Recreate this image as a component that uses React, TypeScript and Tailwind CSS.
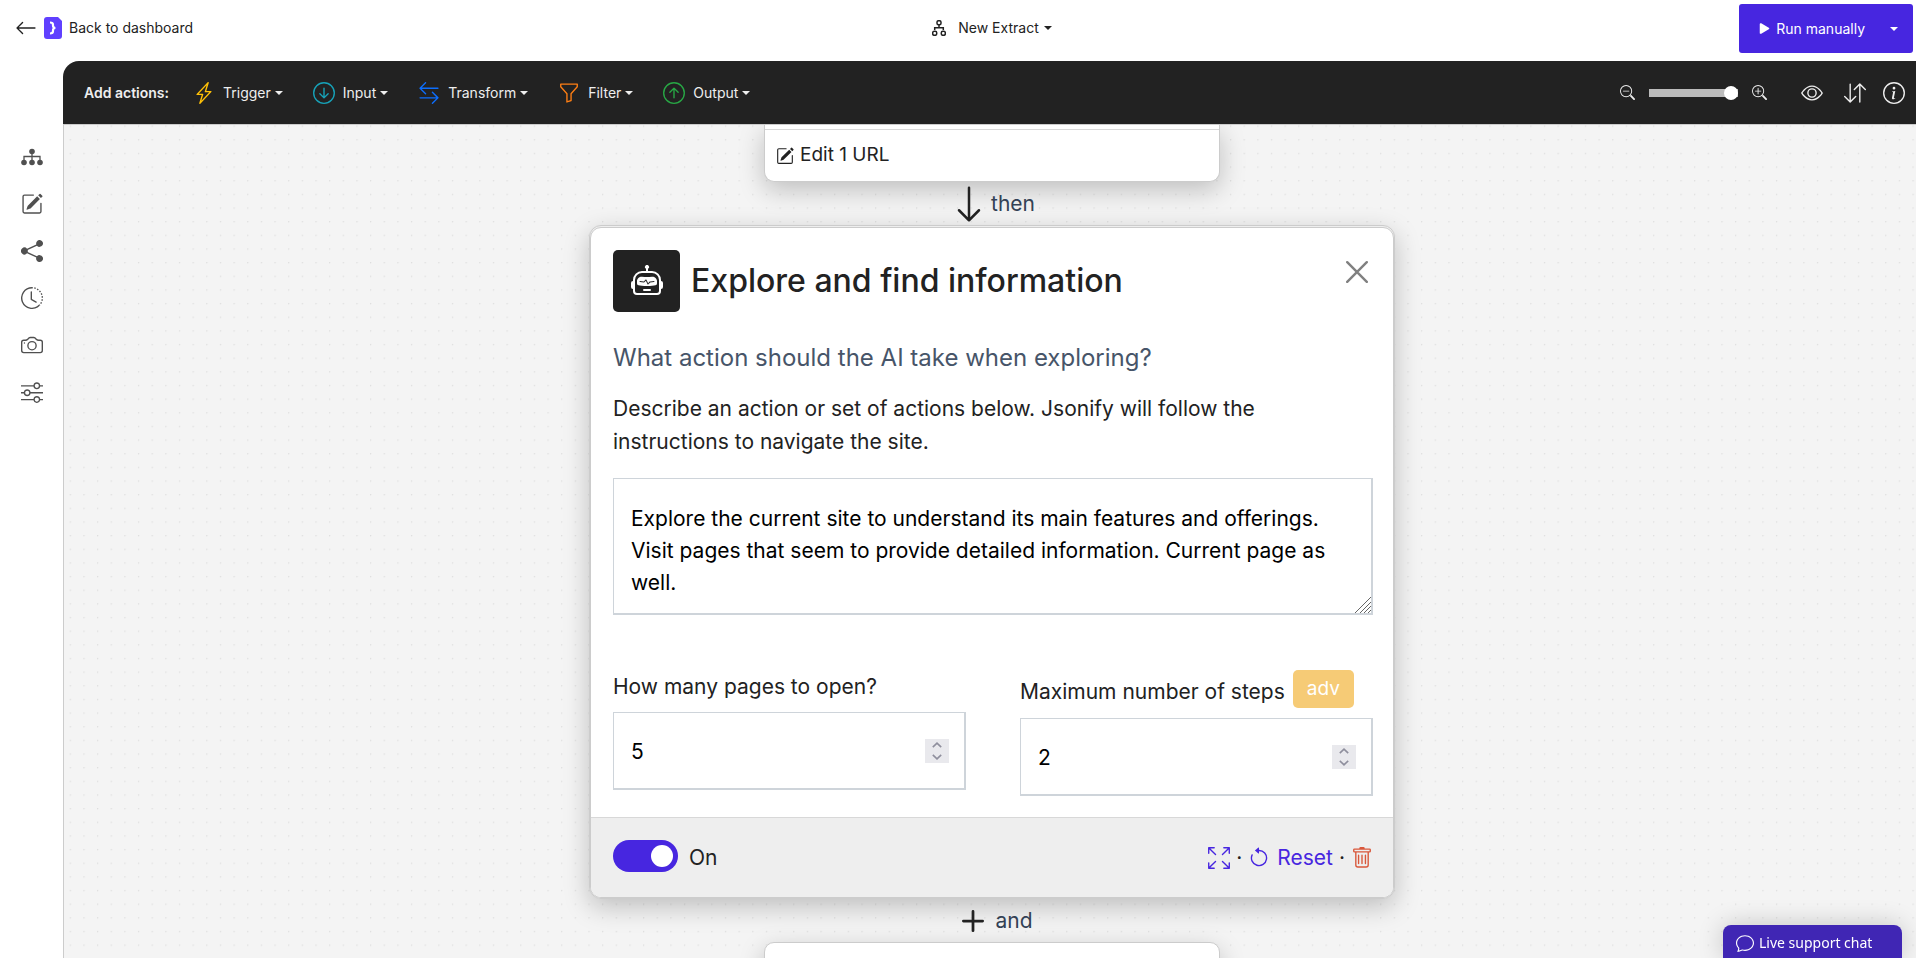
import React, { useState } from "react";
import {
  BsArrowCounterclockwise,
  BsArrowDown,
  BsArrowDownCircle,
  BsArrowDownUp,
  BsArrowLeft,
  BsArrowLeftRight,
  BsArrowUpCircle,
  BsArrowsFullscreen,
  BsCamera,
  BsChat,
  BsClockHistory,
  BsEye,
  BsFunnel,
  BsInfoCircle,
  BsLightningCharge,
  BsPencilSquare,
  BsPlayFill,
  BsPlus,
  BsRobot,
  BsShareFill,
  BsSliders,
  BsTrash,
  BsZoomIn,
  BsZoomOut,
} from "react-icons/bs";

const Caret = () => (
  <svg viewBox="0 0 8 4" className="h-1 w-2" fill="currentColor">
    <path d="M0 0h8L4 4z" />
  </svg>
);

const Logo = () => (
  <svg viewBox="0 0 18 22" className="h-[22px] w-[18px]">
    <path d="M3 0h11l4 4v15a3 3 0 0 1-3 3H3a3 3 0 0 1-3-3V3a3 3 0 0 1 3-3z" fill="#6040ff" />
    <path
      d="M6 5.500c2.200 0 3 .8 3 2.200v1.100c0 1.200.7 2 2.300 2.200-1.600.2-2.300 1-2.300 2.200v1.100c0 1.400-.8 2.200-3 2.200"
      fill="none"
      stroke="#fff"
      strokeWidth="2.200"
    />
  </svg>
);

const FlowIcon = () => (
  <svg viewBox="0 0 14 16" className="h-4 w-[14px]" fill="none" stroke="#222" strokeWidth="1.5">
    <rect x="5" y="0.700" width="4" height="4" rx="1.500" />
    <rect x="0.700" y="11.300" width="4" height="4" rx="1.500" />
    <rect x="9.300" y="11.300" width="4" height="4" rx="1.500" />
    <path d="M7 4.700v3M2.700 10V7.700h8.600V10" />
  </svg>
);

const SitemapIcon = () => (
  <svg viewBox="0 0 22 22" className="h-[22px] w-[22px]" fill="currentColor">
    <circle cx="11" cy="5.500" r="2.800" />
    <circle cx="3" cy="16.500" r="2.800" />
    <circle cx="11" cy="16.500" r="2.800" />
    <circle cx="19" cy="16.500" r="2.800" />
    <path d="M11 6v9M3 14v-3.500h16V14" fill="none" stroke="currentColor" strokeWidth="1.300" />
  </svg>
);

const actions = [
  { name: "Trigger", icon: <BsLightningCharge className="h-[22px] w-[22px] text-[#ffc107]" /> },
  { name: "Input", icon: <BsArrowDownCircle className="h-[22px] w-[22px] text-[#17a2b8]" /> },
  { name: "Transform", icon: <BsArrowLeftRight className="h-[22px] w-[22px] text-[#0d6efd]" /> },
  { name: "Filter", icon: <BsFunnel className="h-[22px] w-[22px] text-[#fd7e14]" /> },
  { name: "Output", icon: <BsArrowUpCircle className="h-[22px] w-[22px] text-[#28a745]" /> },
];

const sideLinks = [
  { name: "Workflow", icon: <SitemapIcon /> },
  { name: "Edit", icon: <BsPencilSquare className="h-[22px] w-[22px]" /> },
  { name: "Share", icon: <BsShareFill className="h-[22px] w-[22px]" /> },
  { name: "History", icon: <BsClockHistory className="h-[22px] w-[22px]" /> },
  { name: "Snapshots", icon: <BsCamera className="h-[22px] w-[22px]" /> },
  { name: "Settings", icon: <BsSliders className="h-[22px] w-[22px]" /> },
];

const Header = () => (
  <header className="flex h-[61px] items-start justify-between pl-[15px] pr-[3px] text-sm text-[#222]">
    <a href="#dashboard" className="flex flex-1 items-center pt-[17px]">
      <BsArrowLeft className="h-[22px] w-[22px]" />
      <span className="mx-[7px]">
        <Logo />
      </span>
      Back to dashboard
    </a>
    <button className="ml-14 flex items-center pt-[17px] leading-[22px]">
      <FlowIcon />
      <span className="ml-3 mr-[5px]">New Extract</span>
      <Caret />
    </button>
    <div className="flex flex-1 justify-end pt-1">
      <div className="flex h-[49px] rounded-[3px] bg-[#4726e0] text-white">
        <button className="flex items-center pl-4 pr-2.5">
          <BsPlayFill className="h-[19px] w-[19px]" />
          <span className="ml-0.5">Run manually</span>
        </button>
        <button aria-label="Run options" className="px-[15px]">
          <Caret />
        </button>
      </div>
    </div>
  </header>
);

const Toolbar = () => (
  <div className="flex h-[63px] shrink-0 items-center justify-between rounded-tl-2xl bg-[#222] pl-[21px] pr-[11px] text-sm text-[#eee]">
    <div className="flex items-center">
      <span className="mr-[9px] font-semibold">Add actions:</span>
      {actions.map((action) => (
        <button key={action.name} className="flex items-center px-[15px]">
          {action.icon}
          <span className="ml-2 mr-1">{action.name}</span>
          <Caret />
        </button>
      ))}
    </div>
    <div className="flex items-center">
      <button aria-label="Zoom out">
        <BsZoomOut className="h-[15px] w-[15px]" />
      </button>
      <input
        type="range"
        aria-label="Zoom"
        defaultValue={100}
        className="mx-[14px] h-2 w-[89px] appearance-none bg-[#bbb] [&::-webkit-slider-thumb]:h-[14px] [&::-webkit-slider-thumb]:w-[14px] [&::-webkit-slider-thumb]:appearance-none [&::-webkit-slider-thumb]:rounded-full [&::-webkit-slider-thumb]:bg-white"
      />
      <button aria-label="Zoom in">
        <BsZoomIn className="h-[15px] w-[15px]" />
      </button>
      <button aria-label="Preview" className="ml-[34px]">
        <BsEye className="h-[22px] w-[22px]" />
      </button>
      <button aria-label="Reorder" className="ml-[21px]">
        <BsArrowDownUp className="h-[22px] w-[22px]" />
      </button>
      <button aria-label="Info" className="ml-[17px]">
        <BsInfoCircle className="h-[22px] w-[22px]" />
      </button>
    </div>
  </div>
);

const NumberField = ({ id, value }: { id: string; value: number }) => {
  const [count, setCount] = useState(value);
  return (
    <div className="relative">
      <input
        id={id}
        type="number"
        value={count}
        onChange={(e) => setCount(Number(e.target.value))}
        className="h-[78px] w-full appearance-none border border-b-2 border-r-2 border-[#ced4da] bg-white px-[17px] pt-0.5 text-[21px] text-black [&::-webkit-inner-spin-button]:appearance-none"
      />
      <div className="absolute right-[17px] top-[27px] flex h-6 w-6 flex-col items-center bg-[#e9e9ed] text-[#8f8f9d]">
        <button aria-label="Increase" className="flex h-3 items-center" onClick={() => setCount(count + 1)}>
          <svg viewBox="0 0 10 6" className="h-1.5 w-2.5" fill="none" stroke="currentColor" strokeWidth="1.600">
            <path d="M.8 5.200 5 1.200l4.200 4" />
          </svg>
        </button>
        <button aria-label="Decrease" className="flex h-3 items-center" onClick={() => setCount(count - 1)}>
          <svg viewBox="0 0 10 6" className="h-1.5 w-2.5" fill="none" stroke="currentColor" strokeWidth="1.600">
            <path d="M.8.8 5 4.800l4.200-4" />
          </svg>
        </button>
      </div>
    </div>
  );
};

const ExploreCard = () => {
  const [on, setOn] = useState(true);
  return (
    <section className="w-full max-w-[806px] rounded-xl border border-[#ccc] bg-[#eee] pt-px shadow-[0_8px_26px_rgba(0,0,0,0.22)]">
      <div className="overflow-hidden rounded-[11px] border border-[#ccc] bg-white">
        <div className="pl-[22px] pr-5">
          <div className="flex items-start justify-between pt-[22px]">
            <div className="flex items-center">
              <div className="flex h-[62px] w-[67px] items-center justify-center rounded-[5px] bg-[#222]">
                <BsRobot className="h-8 w-8 text-white" />
              </div>
              <h2 className="ml-[11px] text-[32px] font-medium">Explore and find information</h2>
            </div>
            <button aria-label="Close" className="mr-[5px] mt-[11px]">
              <svg viewBox="0 0 22 22" className="h-[22px] w-[22px]" stroke="#808080" strokeWidth="2.400" strokeLinecap="round">
                <path d="M1.200 1.200l19.600 19.600M20.800 1.200L1.200 20.800" />
              </svg>
            </button>
          </div>
          <h3 className="mt-[30px] text-2xl text-[#475569]">What action should the AI take when exploring?</h3>
          <label htmlFor="prompt" className="mt-[18px] block text-[21px] leading-[33px]">
            Describe an action or set of actions below. Jsonify will follow the instructions to navigate the site.
          </label>
          <div className="relative mt-5">
            <textarea
              id="prompt"
              rows={3}
              className="block h-[137px] w-full resize-none overflow-hidden border border-b-2 border-r-2 border-[#ced4da] bg-white px-[17px] pt-6 text-[21px] leading-8 text-black"
              defaultValue="Explore the current site to understand its main features and offerings. Visit pages that seem to provide detailed information. Current page as well."
            />
            <svg viewBox="0 0 16 16" className="absolute bottom-0.5 right-0.5 h-4 w-4" stroke="#666">
              <path d="M0 16L16 0M5 16L16 5M9 16l7-7M13 16l3-3" />
            </svg>
          </div>
          <div className="grid grid-cols-2 gap-[54px] pb-[21px] pt-[55px] text-[21px] leading-[33px]">
            <div>
              <label htmlFor="pages" className="mb-[9px] block">
                How many pages to open?
              </label>
              <NumberField id="pages" value={5} />
            </div>
            <div>
              <label htmlFor="steps" className="mb-2.5 flex items-end whitespace-nowrap">
                <span>Maximum number of steps</span>
                <span className="ml-2 rounded-[5px] bg-[#f6cb76] px-3.5 text-[19px] leading-[38px] text-white">adv</span>
              </label>
              <NumberField id="steps" value={2} />
            </div>
          </div>
        </div>
        <div className="flex h-20 items-center justify-between border-t border-[#d8d8d8] bg-[#eee] pl-[22px] pr-5 text-[21px]">
          <div className="flex items-center">
            <input
              id="enabled"
              type="checkbox"
              role="switch"
              checked={on}
              onChange={() => setOn(!on)}
              className="relative mb-1 h-8 w-[65px] appearance-none rounded-full bg-gray-400 before:absolute before:left-[6px] before:top-[5px] before:h-[22px] before:w-[22px] before:rounded-full before:bg-white checked:bg-[#4726e0] checked:before:left-[38px]"
            />
            <label htmlFor="enabled" className="ml-[11px]">
              {on ? "On" : "Off"}
            </label>
          </div>
          <div className="flex items-center text-[#4726e0]">
            <button aria-label="Expand">
              <BsArrowsFullscreen className="h-[22px] w-[22px]" />
            </button>
            <span className="mx-1.5 text-[#222]">·</span>
            <button className="flex items-center">
              <BsArrowCounterclockwise className="mr-[7px] h-[22px] w-[22px]" />
              Reset
            </button>
            <span className="mx-1.5 text-[#222]">·</span>
            <button aria-label="Delete" className="text-[#d9573a]">
              <BsTrash className="h-[22px] w-[22px]" />
            </button>
          </div>
        </div>
      </div>
    </section>
  );
};

const Canvas = () => (
  <main className="relative flex flex-1 flex-col items-center overflow-hidden border-l border-t border-[#ccc] bg-[#f4f4f4] pl-1">
    <svg className="absolute inset-0 h-full w-full">
      <defs>
        <pattern id="dots" width="20" height="20" patternUnits="userSpaceOnUse" patternTransform="translate(5.700 .5) scale(.6825)">
          <circle cx="1" cy="1" r="1" fill="#dadada" />
        </pattern>
      </defs>
      <rect width="100%" height="100%" fill="url(#dots)" />
    </svg>
    <div className="relative flex w-full flex-col items-center">
      <section className="w-full max-w-[456px] shrink-0 rounded-b-[10px] border border-t-0 border-[#ccc] bg-white pt-1 shadow-[0_8px_26px_rgba(0,0,0,0.22)]">
        <button className="flex h-[52px] w-full items-center border-t border-[#d8d8d8] px-[11px] text-[19px]">
          <BsPencilSquare className="mr-1.5 h-[18px] w-[18px]" />
          Edit 1 URL
        </button>
      </section>
      <div className="flex h-[43px] items-center text-[21px] text-[#334155]">
        <BsArrowDown className="h-10 w-10 text-[#222]" />
        <span className="ml-0.5">then</span>
      </div>
      <ExploreCard />
      <div className="flex h-[43px] items-center text-[21px] text-[#334155]">
        <BsPlus className="h-11 w-11 text-[#222]" />
        <span>and</span>
      </div>
      <section className="h-20 w-full max-w-[456px] shrink-0 rounded-[10px] border border-[#ccc] bg-white shadow-[0_8px_26px_rgba(0,0,0,0.22)]" />
    </div>
  </main>
);

const App = () => {
  return (
    <div className="flex h-screen flex-col overflow-hidden bg-white font-['Inter',sans-serif] text-[#222]">
      <Header />
      <div className="flex min-h-0 flex-1">
        <nav className="flex w-[63px] shrink-0 flex-col items-center gap-[25px] pt-[85px] text-[#505050]">
          {sideLinks.map((link) => (
            <a key={link.name} href="#menu" aria-label={link.name} className="ml-px">
              {link.icon}
            </a>
          ))}
        </nav>
        <div className="flex min-w-0 flex-1 flex-col">
          <Toolbar />
          <Canvas />
        </div>
      </div>
      <button className="fixed bottom-0 right-[14px] flex h-[33px] w-[179px] items-center rounded-t-lg bg-[#4026b4] pl-[13px] pt-0.5 font-['Noto_Sans',sans-serif] text-sm text-white shadow-[0_0_26px_rgba(0,0,0,0.2)]">
        <BsChat className="mr-[5px] h-[18px] w-[18px]" />
        Live support chat
      </button>
    </div>
  );
};

export default App;
